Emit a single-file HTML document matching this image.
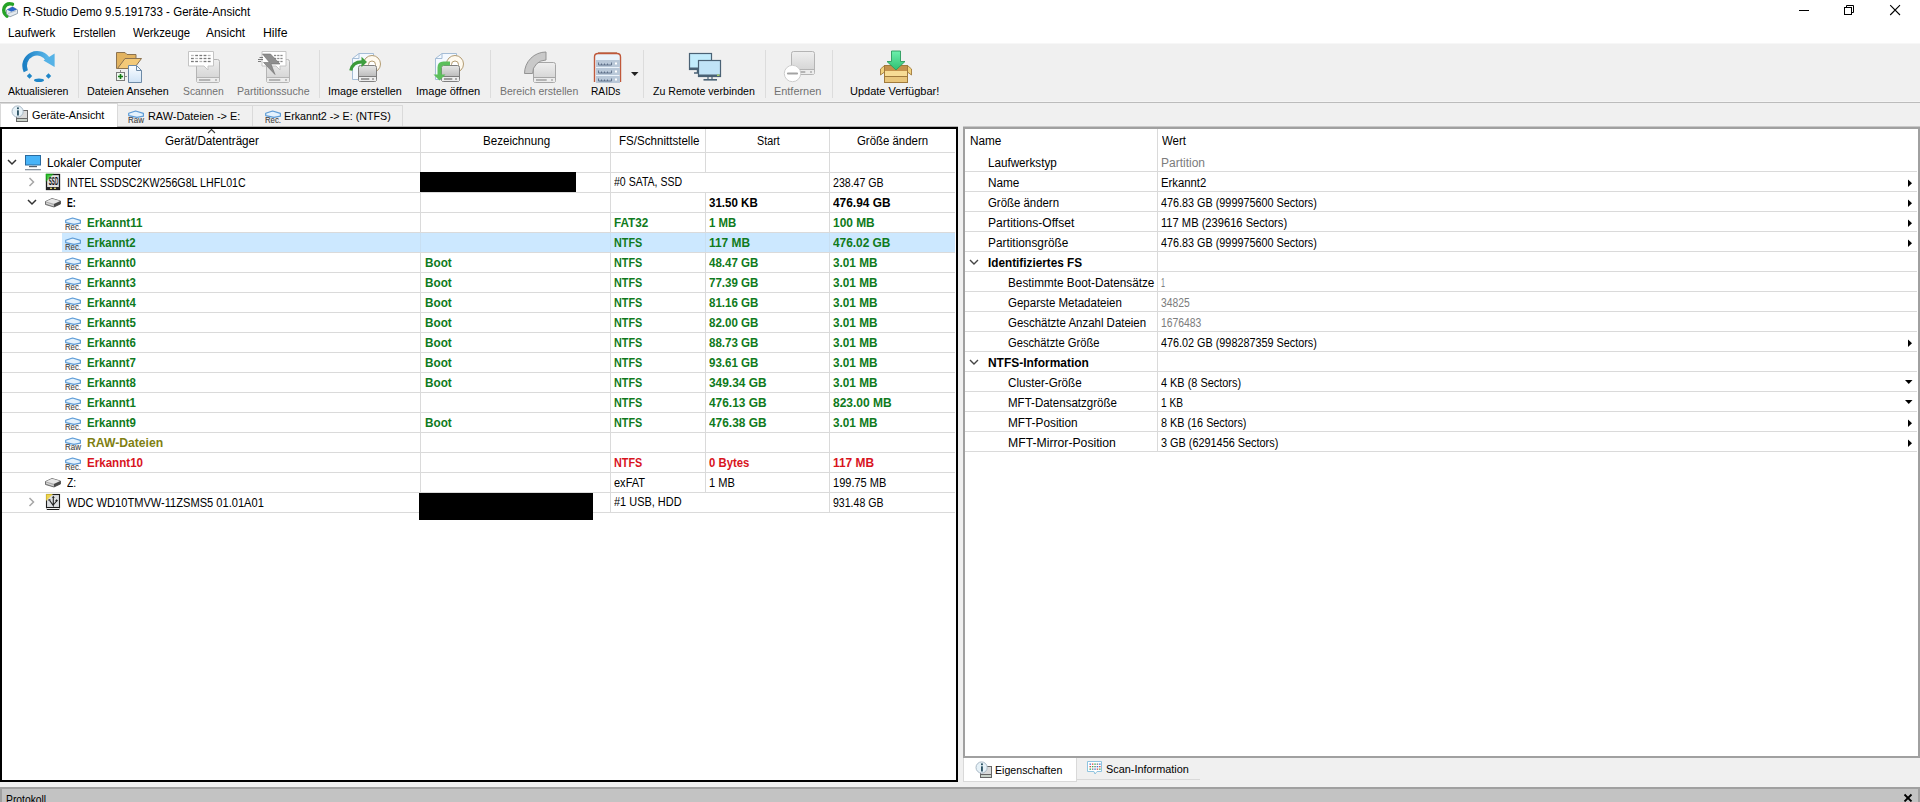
<!DOCTYPE html>
<html><head><meta charset="utf-8"><style>
html,body{margin:0;padding:0;width:1920px;height:802px;overflow:hidden;background:#f0f0f0}
.r{position:absolute}
.t{position:absolute;white-space:nowrap;font-family:"Liberation Sans",sans-serif;transform-origin:0 0;color:#000}
svg{position:absolute;left:0;top:0}
</style></head><body>
<div class="r" style="left:0px;top:0px;width:1920px;height:43px;background:#fff;"></div><div class="r" style="left:0px;top:43px;width:1920px;height:1px;background:#f7f7f7;"></div><div class="r" style="left:0px;top:101px;width:1920px;height:1px;background:#f4f4f4;"></div><div class="r" style="left:0px;top:102px;width:1920px;height:1px;background:#bcbcbc;"></div><div class="t" style="left:23.00px;top:6px;font-size:12px;line-height:12px;transform:scaleX(0.9620);">R-Studio Demo 9.5.191733 - Geräte-Ansicht</div><div class="r" style="left:1799px;top:10px;width:10px;height:1px;background:#000;"></div><div class="t" style="left:8.00px;top:27px;font-size:12px;line-height:12px;transform:scaleX(0.9700);">Laufwerk</div><div class="t" style="left:72.50px;top:27px;font-size:12px;line-height:12px;transform:scaleX(0.9149);">Erstellen</div><div class="t" style="left:132.50px;top:27px;font-size:12px;line-height:12px;transform:scaleX(0.9426);">Werkzeuge</div><div class="t" style="left:206.00px;top:27px;font-size:12px;line-height:12px;transform:scaleX(0.9938);">Ansicht</div><div class="t" style="left:262.50px;top:27px;font-size:12px;line-height:12px;transform:scaleX(1.0208);">Hilfe</div><div class="r" style="left:78px;top:50px;width:1px;height:48px;background:#dcdcdc;"></div><div class="r" style="left:319px;top:50px;width:1px;height:48px;background:#dcdcdc;"></div><div class="r" style="left:490px;top:50px;width:1px;height:48px;background:#dcdcdc;"></div><div class="r" style="left:643px;top:50px;width:1px;height:48px;background:#dcdcdc;"></div><div class="r" style="left:765px;top:50px;width:1px;height:48px;background:#dcdcdc;"></div><div class="r" style="left:832px;top:50px;width:1px;height:48px;background:#dcdcdc;"></div><div class="t" style="left:8.00px;top:86px;font-size:11px;line-height:11px;transform:scaleX(0.9587);">Aktualisieren</div><div class="t" style="left:87.00px;top:86px;font-size:11px;line-height:11px;transform:scaleX(0.9762);">Dateien Ansehen</div><div class="t" style="left:183.00px;top:86px;font-size:11px;line-height:11px;color:#727272;transform:scaleX(0.9395);">Scannen</div><div class="t" style="left:237.00px;top:86px;font-size:11px;line-height:11px;color:#727272;transform:scaleX(0.9653);">Partitionssuche</div><div class="t" style="left:328.00px;top:86px;font-size:11px;line-height:11px;transform:scaleX(0.9813);">Image erstellen</div><div class="t" style="left:416.00px;top:86px;font-size:11px;line-height:11px;transform:scaleX(1.0031);">Image öffnen</div><div class="t" style="left:500.00px;top:86px;font-size:11px;line-height:11px;color:#727272;transform:scaleX(0.9549);">Bereich erstellen</div><div class="t" style="left:591.00px;top:86px;font-size:11px;line-height:11px;transform:scaleX(0.9250);">RAIDs</div><div class="t" style="left:653.00px;top:86px;font-size:11px;line-height:11px;transform:scaleX(0.9623);">Zu Remote verbinden</div><div class="t" style="left:774.00px;top:86px;font-size:11px;line-height:11px;color:#727272;transform:scaleX(0.9917);">Entfernen</div><div class="t" style="left:850.00px;top:86px;font-size:11px;line-height:11px;">Update Verfügbar!</div><div class="r" style="left:0px;top:103px;width:118px;height:24px;background:#d9d9d9;"></div><div class="r" style="left:1px;top:104px;width:116px;height:23px;background:#fff;"></div><div class="r" style="left:117px;top:105px;width:136px;height:22px;background:#dadada;"></div><div class="r" style="left:118px;top:106px;width:134px;height:21px;background:#f0f0f0;"></div><div class="r" style="left:252px;top:105px;width:151px;height:22px;background:#dadada;"></div><div class="r" style="left:253px;top:106px;width:149px;height:21px;background:#f0f0f0;"></div><div class="r" style="left:117px;top:126px;width:841px;height:1px;background:#b4b4b4;"></div><div class="t" style="left:32.00px;top:110px;font-size:11px;line-height:11px;transform:scaleX(0.9863);">Geräte-Ansicht</div><div class="t" style="left:148.00px;top:111px;font-size:11px;line-height:11px;transform:scaleX(0.9892);">RAW-Dateien -&gt; E:</div><div class="t" style="left:284.00px;top:111px;font-size:11px;line-height:11px;transform:scaleX(0.9727);">Erkannt2 -&gt; E: (NTFS)</div><div class="r" style="left:0px;top:127px;width:958px;height:655px;background:#000;"></div><div class="r" style="left:2px;top:129px;width:954px;height:651px;background:#fff;"></div><div class="r" style="left:62px;top:233px;width:893px;height:19px;background:#cce8ff;"></div><div class="r" style="left:2px;top:152px;width:953px;height:1px;background:#dadada;"></div><div class="r" style="left:2px;top:172px;width:953px;height:1px;background:#dadada;"></div><div class="r" style="left:2px;top:192px;width:953px;height:1px;background:#dadada;"></div><div class="r" style="left:2px;top:212px;width:953px;height:1px;background:#dadada;"></div><div class="r" style="left:2px;top:232px;width:953px;height:1px;background:#dadada;"></div><div class="r" style="left:2px;top:252px;width:953px;height:1px;background:#dadada;"></div><div class="r" style="left:2px;top:272px;width:953px;height:1px;background:#dadada;"></div><div class="r" style="left:2px;top:292px;width:953px;height:1px;background:#dadada;"></div><div class="r" style="left:2px;top:312px;width:953px;height:1px;background:#dadada;"></div><div class="r" style="left:2px;top:332px;width:953px;height:1px;background:#dadada;"></div><div class="r" style="left:2px;top:352px;width:953px;height:1px;background:#dadada;"></div><div class="r" style="left:2px;top:372px;width:953px;height:1px;background:#dadada;"></div><div class="r" style="left:2px;top:392px;width:953px;height:1px;background:#dadada;"></div><div class="r" style="left:2px;top:412px;width:953px;height:1px;background:#dadada;"></div><div class="r" style="left:2px;top:432px;width:953px;height:1px;background:#dadada;"></div><div class="r" style="left:2px;top:452px;width:953px;height:1px;background:#dadada;"></div><div class="r" style="left:2px;top:472px;width:953px;height:1px;background:#dadada;"></div><div class="r" style="left:2px;top:492px;width:953px;height:1px;background:#dadada;"></div><div class="r" style="left:2px;top:512px;width:953px;height:1px;background:#dadada;"></div><div class="r" style="left:420px;top:129px;width:1px;height:23px;background:#dadada;"></div><div class="r" style="left:610px;top:129px;width:1px;height:23px;background:#dadada;"></div><div class="r" style="left:705px;top:129px;width:1px;height:23px;background:#dadada;"></div><div class="r" style="left:829px;top:129px;width:1px;height:23px;background:#dadada;"></div><div class="r" style="left:420px;top:153px;width:1px;height:19px;background:#dadada;"></div><div class="r" style="left:610px;top:153px;width:1px;height:19px;background:#dadada;"></div><div class="r" style="left:705px;top:153px;width:1px;height:19px;background:#dadada;"></div><div class="r" style="left:829px;top:153px;width:1px;height:19px;background:#dadada;"></div><div class="r" style="left:420px;top:173px;width:1px;height:19px;background:#dadada;"></div><div class="r" style="left:610px;top:173px;width:1px;height:19px;background:#dadada;"></div><div class="r" style="left:829px;top:173px;width:1px;height:19px;background:#dadada;"></div><div class="r" style="left:420px;top:193px;width:1px;height:19px;background:#dadada;"></div><div class="r" style="left:610px;top:193px;width:1px;height:19px;background:#dadada;"></div><div class="r" style="left:705px;top:193px;width:1px;height:19px;background:#dadada;"></div><div class="r" style="left:829px;top:193px;width:1px;height:19px;background:#dadada;"></div><div class="r" style="left:420px;top:213px;width:1px;height:19px;background:#dadada;"></div><div class="r" style="left:610px;top:213px;width:1px;height:19px;background:#dadada;"></div><div class="r" style="left:705px;top:213px;width:1px;height:19px;background:#dadada;"></div><div class="r" style="left:829px;top:213px;width:1px;height:19px;background:#dadada;"></div><div class="r" style="left:420px;top:233px;width:1px;height:19px;background:#c8dff2;"></div><div class="r" style="left:610px;top:233px;width:1px;height:19px;background:#c8dff2;"></div><div class="r" style="left:705px;top:233px;width:1px;height:19px;background:#c8dff2;"></div><div class="r" style="left:829px;top:233px;width:1px;height:19px;background:#c8dff2;"></div><div class="r" style="left:420px;top:253px;width:1px;height:19px;background:#dadada;"></div><div class="r" style="left:610px;top:253px;width:1px;height:19px;background:#dadada;"></div><div class="r" style="left:705px;top:253px;width:1px;height:19px;background:#dadada;"></div><div class="r" style="left:829px;top:253px;width:1px;height:19px;background:#dadada;"></div><div class="r" style="left:420px;top:273px;width:1px;height:19px;background:#dadada;"></div><div class="r" style="left:610px;top:273px;width:1px;height:19px;background:#dadada;"></div><div class="r" style="left:705px;top:273px;width:1px;height:19px;background:#dadada;"></div><div class="r" style="left:829px;top:273px;width:1px;height:19px;background:#dadada;"></div><div class="r" style="left:420px;top:293px;width:1px;height:19px;background:#dadada;"></div><div class="r" style="left:610px;top:293px;width:1px;height:19px;background:#dadada;"></div><div class="r" style="left:705px;top:293px;width:1px;height:19px;background:#dadada;"></div><div class="r" style="left:829px;top:293px;width:1px;height:19px;background:#dadada;"></div><div class="r" style="left:420px;top:313px;width:1px;height:19px;background:#dadada;"></div><div class="r" style="left:610px;top:313px;width:1px;height:19px;background:#dadada;"></div><div class="r" style="left:705px;top:313px;width:1px;height:19px;background:#dadada;"></div><div class="r" style="left:829px;top:313px;width:1px;height:19px;background:#dadada;"></div><div class="r" style="left:420px;top:333px;width:1px;height:19px;background:#dadada;"></div><div class="r" style="left:610px;top:333px;width:1px;height:19px;background:#dadada;"></div><div class="r" style="left:705px;top:333px;width:1px;height:19px;background:#dadada;"></div><div class="r" style="left:829px;top:333px;width:1px;height:19px;background:#dadada;"></div><div class="r" style="left:420px;top:353px;width:1px;height:19px;background:#dadada;"></div><div class="r" style="left:610px;top:353px;width:1px;height:19px;background:#dadada;"></div><div class="r" style="left:705px;top:353px;width:1px;height:19px;background:#dadada;"></div><div class="r" style="left:829px;top:353px;width:1px;height:19px;background:#dadada;"></div><div class="r" style="left:420px;top:373px;width:1px;height:19px;background:#dadada;"></div><div class="r" style="left:610px;top:373px;width:1px;height:19px;background:#dadada;"></div><div class="r" style="left:705px;top:373px;width:1px;height:19px;background:#dadada;"></div><div class="r" style="left:829px;top:373px;width:1px;height:19px;background:#dadada;"></div><div class="r" style="left:420px;top:393px;width:1px;height:19px;background:#dadada;"></div><div class="r" style="left:610px;top:393px;width:1px;height:19px;background:#dadada;"></div><div class="r" style="left:705px;top:393px;width:1px;height:19px;background:#dadada;"></div><div class="r" style="left:829px;top:393px;width:1px;height:19px;background:#dadada;"></div><div class="r" style="left:420px;top:413px;width:1px;height:19px;background:#dadada;"></div><div class="r" style="left:610px;top:413px;width:1px;height:19px;background:#dadada;"></div><div class="r" style="left:705px;top:413px;width:1px;height:19px;background:#dadada;"></div><div class="r" style="left:829px;top:413px;width:1px;height:19px;background:#dadada;"></div><div class="r" style="left:420px;top:433px;width:1px;height:19px;background:#dadada;"></div><div class="r" style="left:610px;top:433px;width:1px;height:19px;background:#dadada;"></div><div class="r" style="left:705px;top:433px;width:1px;height:19px;background:#dadada;"></div><div class="r" style="left:829px;top:433px;width:1px;height:19px;background:#dadada;"></div><div class="r" style="left:420px;top:453px;width:1px;height:19px;background:#dadada;"></div><div class="r" style="left:610px;top:453px;width:1px;height:19px;background:#dadada;"></div><div class="r" style="left:705px;top:453px;width:1px;height:19px;background:#dadada;"></div><div class="r" style="left:829px;top:453px;width:1px;height:19px;background:#dadada;"></div><div class="r" style="left:420px;top:473px;width:1px;height:19px;background:#dadada;"></div><div class="r" style="left:610px;top:473px;width:1px;height:19px;background:#dadada;"></div><div class="r" style="left:705px;top:473px;width:1px;height:19px;background:#dadada;"></div><div class="r" style="left:829px;top:473px;width:1px;height:19px;background:#dadada;"></div><div class="r" style="left:420px;top:493px;width:1px;height:19px;background:#dadada;"></div><div class="r" style="left:610px;top:493px;width:1px;height:19px;background:#dadada;"></div><div class="r" style="left:829px;top:493px;width:1px;height:19px;background:#dadada;"></div><div class="t" style="left:165.00px;top:135px;font-size:12px;line-height:12px;transform:scaleX(0.9716);">Gerät/Datenträger</div><div class="t" style="left:483.00px;top:135px;font-size:12px;line-height:12px;transform:scaleX(0.9681);">Bezeichnung</div><div class="t" style="left:618.50px;top:135px;font-size:12px;line-height:12px;transform:scaleX(0.9643);">FS/Schnittstelle</div><div class="t" style="left:756.50px;top:135px;font-size:12px;line-height:12px;transform:scaleX(0.8962);">Start</div><div class="t" style="left:857.00px;top:135px;font-size:12px;line-height:12px;transform:scaleX(0.9507);">Größe ändern</div><div class="t" style="left:47.00px;top:157px;font-size:12px;line-height:12px;transform:scaleX(0.9905);">Lokaler Computer</div><div class="t" style="left:67.00px;top:177px;font-size:12px;line-height:12px;transform:scaleX(0.8881);">INTEL SSDSC2KW256G8L LHFL01C</div><div class="t" style="left:614.00px;top:176px;font-size:12px;line-height:12px;transform:scaleX(0.8782);">#0 SATA, SSD</div><div class="t" style="left:833.00px;top:177px;font-size:12px;line-height:12px;transform:scaleX(0.8825);">238.47 GB</div><div class="t" style="left:67.00px;top:197px;font-size:12px;line-height:12px;font-weight:bold;transform:scaleX(0.7292);">E:</div><div class="t" style="left:709.00px;top:197px;font-size:12px;line-height:12px;font-weight:bold;transform:scaleX(0.9608);">31.50 KB</div><div class="t" style="left:833.00px;top:197px;font-size:12px;line-height:12px;font-weight:bold;transform:scaleX(0.9914);">476.94 GB</div><div class="t" style="left:87.00px;top:217px;font-size:12px;line-height:12px;font-weight:bold;color:#0f7a20;transform:scaleX(0.9655);">Erkannt11</div><div class="t" style="left:614.00px;top:217px;font-size:12px;line-height:12px;font-weight:bold;color:#0f7a20;transform:scaleX(0.9743);">FAT32</div><div class="t" style="left:709.00px;top:217px;font-size:12px;line-height:12px;font-weight:bold;color:#0f7a20;transform:scaleX(0.9517);">1 MB</div><div class="t" style="left:833.00px;top:217px;font-size:12px;line-height:12px;font-weight:bold;color:#0f7a20;transform:scaleX(0.9929);">100 MB</div><div class="t" style="left:87.00px;top:237px;font-size:12px;line-height:12px;font-weight:bold;color:#0f7a20;transform:scaleX(0.9471);">Erkannt2</div><div class="t" style="left:614.00px;top:237px;font-size:12px;line-height:12px;font-weight:bold;color:#0f7a20;transform:scaleX(0.9000);">NTFS</div><div class="t" style="left:709.00px;top:237px;font-size:12px;line-height:12px;font-weight:bold;color:#0f7a20;transform:scaleX(0.9929);">117 MB</div><div class="t" style="left:833.00px;top:237px;font-size:12px;line-height:12px;font-weight:bold;color:#0f7a20;transform:scaleX(0.9897);">476.02 GB</div><div class="t" style="left:87.00px;top:257px;font-size:12px;line-height:12px;font-weight:bold;color:#0f7a20;transform:scaleX(0.9519);">Erkannt0</div><div class="t" style="left:425.00px;top:257px;font-size:12px;line-height:12px;font-weight:bold;color:#0f7a20;transform:scaleX(0.9778);">Boot</div><div class="t" style="left:614.00px;top:257px;font-size:12px;line-height:12px;font-weight:bold;color:#0f7a20;transform:scaleX(0.9000);">NTFS</div><div class="t" style="left:709.00px;top:257px;font-size:12px;line-height:12px;font-weight:bold;color:#0f7a20;transform:scaleX(0.9615);">48.47 GB</div><div class="t" style="left:833.00px;top:257px;font-size:12px;line-height:12px;font-weight:bold;color:#0f7a20;transform:scaleX(0.9804);">3.01 MB</div><div class="t" style="left:87.00px;top:277px;font-size:12px;line-height:12px;font-weight:bold;color:#0f7a20;transform:scaleX(0.9519);">Erkannt3</div><div class="t" style="left:425.00px;top:277px;font-size:12px;line-height:12px;font-weight:bold;color:#0f7a20;transform:scaleX(0.9778);">Boot</div><div class="t" style="left:614.00px;top:277px;font-size:12px;line-height:12px;font-weight:bold;color:#0f7a20;transform:scaleX(0.9000);">NTFS</div><div class="t" style="left:709.00px;top:277px;font-size:12px;line-height:12px;font-weight:bold;color:#0f7a20;transform:scaleX(0.9615);">77.39 GB</div><div class="t" style="left:833.00px;top:277px;font-size:12px;line-height:12px;font-weight:bold;color:#0f7a20;transform:scaleX(0.9804);">3.01 MB</div><div class="t" style="left:87.00px;top:297px;font-size:12px;line-height:12px;font-weight:bold;color:#0f7a20;transform:scaleX(0.9519);">Erkannt4</div><div class="t" style="left:425.00px;top:297px;font-size:12px;line-height:12px;font-weight:bold;color:#0f7a20;transform:scaleX(0.9778);">Boot</div><div class="t" style="left:614.00px;top:297px;font-size:12px;line-height:12px;font-weight:bold;color:#0f7a20;transform:scaleX(0.9000);">NTFS</div><div class="t" style="left:709.00px;top:297px;font-size:12px;line-height:12px;font-weight:bold;color:#0f7a20;transform:scaleX(0.9615);">81.16 GB</div><div class="t" style="left:833.00px;top:297px;font-size:12px;line-height:12px;font-weight:bold;color:#0f7a20;transform:scaleX(0.9804);">3.01 MB</div><div class="t" style="left:87.00px;top:317px;font-size:12px;line-height:12px;font-weight:bold;color:#0f7a20;transform:scaleX(0.9519);">Erkannt5</div><div class="t" style="left:425.00px;top:317px;font-size:12px;line-height:12px;font-weight:bold;color:#0f7a20;transform:scaleX(0.9778);">Boot</div><div class="t" style="left:614.00px;top:317px;font-size:12px;line-height:12px;font-weight:bold;color:#0f7a20;transform:scaleX(0.9000);">NTFS</div><div class="t" style="left:709.00px;top:317px;font-size:12px;line-height:12px;font-weight:bold;color:#0f7a20;transform:scaleX(0.9615);">82.00 GB</div><div class="t" style="left:833.00px;top:317px;font-size:12px;line-height:12px;font-weight:bold;color:#0f7a20;transform:scaleX(0.9804);">3.01 MB</div><div class="t" style="left:87.00px;top:337px;font-size:12px;line-height:12px;font-weight:bold;color:#0f7a20;transform:scaleX(0.9519);">Erkannt6</div><div class="t" style="left:425.00px;top:337px;font-size:12px;line-height:12px;font-weight:bold;color:#0f7a20;transform:scaleX(0.9778);">Boot</div><div class="t" style="left:614.00px;top:337px;font-size:12px;line-height:12px;font-weight:bold;color:#0f7a20;transform:scaleX(0.9000);">NTFS</div><div class="t" style="left:709.00px;top:337px;font-size:12px;line-height:12px;font-weight:bold;color:#0f7a20;transform:scaleX(0.9615);">88.73 GB</div><div class="t" style="left:833.00px;top:337px;font-size:12px;line-height:12px;font-weight:bold;color:#0f7a20;transform:scaleX(0.9804);">3.01 MB</div><div class="t" style="left:87.00px;top:357px;font-size:12px;line-height:12px;font-weight:bold;color:#0f7a20;transform:scaleX(0.9519);">Erkannt7</div><div class="t" style="left:425.00px;top:357px;font-size:12px;line-height:12px;font-weight:bold;color:#0f7a20;transform:scaleX(0.9778);">Boot</div><div class="t" style="left:614.00px;top:357px;font-size:12px;line-height:12px;font-weight:bold;color:#0f7a20;transform:scaleX(0.9000);">NTFS</div><div class="t" style="left:709.00px;top:357px;font-size:12px;line-height:12px;font-weight:bold;color:#0f7a20;transform:scaleX(0.9615);">93.61 GB</div><div class="t" style="left:833.00px;top:357px;font-size:12px;line-height:12px;font-weight:bold;color:#0f7a20;transform:scaleX(0.9804);">3.01 MB</div><div class="t" style="left:87.00px;top:377px;font-size:12px;line-height:12px;font-weight:bold;color:#0f7a20;transform:scaleX(0.9519);">Erkannt8</div><div class="t" style="left:425.00px;top:377px;font-size:12px;line-height:12px;font-weight:bold;color:#0f7a20;transform:scaleX(0.9778);">Boot</div><div class="t" style="left:614.00px;top:377px;font-size:12px;line-height:12px;font-weight:bold;color:#0f7a20;transform:scaleX(0.9000);">NTFS</div><div class="t" style="left:709.00px;top:377px;font-size:12px;line-height:12px;font-weight:bold;color:#0f7a20;transform:scaleX(0.9914);">349.34 GB</div><div class="t" style="left:833.00px;top:377px;font-size:12px;line-height:12px;font-weight:bold;color:#0f7a20;transform:scaleX(0.9804);">3.01 MB</div><div class="t" style="left:87.00px;top:397px;font-size:12px;line-height:12px;font-weight:bold;color:#0f7a20;transform:scaleX(0.9519);">Erkannt1</div><div class="t" style="left:614.00px;top:397px;font-size:12px;line-height:12px;font-weight:bold;color:#0f7a20;transform:scaleX(0.9000);">NTFS</div><div class="t" style="left:709.00px;top:397px;font-size:12px;line-height:12px;font-weight:bold;color:#0f7a20;transform:scaleX(0.9914);">476.13 GB</div><div class="t" style="left:833.00px;top:397px;font-size:12px;line-height:12px;font-weight:bold;color:#0f7a20;">823.00 MB</div><div class="t" style="left:87.00px;top:417px;font-size:12px;line-height:12px;font-weight:bold;color:#0f7a20;transform:scaleX(0.9519);">Erkannt9</div><div class="t" style="left:425.00px;top:417px;font-size:12px;line-height:12px;font-weight:bold;color:#0f7a20;transform:scaleX(0.9778);">Boot</div><div class="t" style="left:614.00px;top:417px;font-size:12px;line-height:12px;font-weight:bold;color:#0f7a20;transform:scaleX(0.9000);">NTFS</div><div class="t" style="left:709.00px;top:417px;font-size:12px;line-height:12px;font-weight:bold;color:#0f7a20;transform:scaleX(0.9914);">476.38 GB</div><div class="t" style="left:833.00px;top:417px;font-size:12px;line-height:12px;font-weight:bold;color:#0f7a20;transform:scaleX(0.9804);">3.01 MB</div><div class="t" style="left:87.00px;top:437px;font-size:12px;line-height:12px;font-weight:bold;color:#7f7f12;transform:scaleX(1.0133);">RAW-Dateien</div><div class="t" style="left:87.00px;top:457px;font-size:12px;line-height:12px;font-weight:bold;color:#d8141e;transform:scaleX(0.9655);">Erkannt10</div><div class="t" style="left:614.00px;top:457px;font-size:12px;line-height:12px;font-weight:bold;color:#d8141e;transform:scaleX(0.9000);">NTFS</div><div class="t" style="left:709.00px;top:457px;font-size:12px;line-height:12px;font-weight:bold;color:#d8141e;transform:scaleX(0.9442);">0 Bytes</div><div class="t" style="left:833.00px;top:457px;font-size:12px;line-height:12px;font-weight:bold;color:#d8141e;transform:scaleX(0.9929);">117 MB</div><div class="t" style="left:67.00px;top:477px;font-size:12px;line-height:12px;transform:scaleX(0.8545);">Z:</div><div class="t" style="left:614.00px;top:477px;font-size:12px;line-height:12px;transform:scaleX(0.9176);">exFAT</div><div class="t" style="left:709.00px;top:477px;font-size:12px;line-height:12px;transform:scaleX(0.9214);">1 MB</div><div class="t" style="left:833.00px;top:477px;font-size:12px;line-height:12px;transform:scaleX(0.9181);">199.75 MB</div><div class="t" style="left:67.00px;top:497px;font-size:12px;line-height:12px;transform:scaleX(0.9244);">WDC WD10TMVW-11ZSMS5 01.01A01</div><div class="t" style="left:614.00px;top:496px;font-size:12px;line-height:12px;transform:scaleX(0.9135);">#1 USB, HDD</div><div class="t" style="left:833.00px;top:497px;font-size:12px;line-height:12px;transform:scaleX(0.8789);">931.48 GB</div><div class="r" style="left:420px;top:172px;width:156px;height:20px;background:#000;"></div><div class="r" style="left:419px;top:493px;width:174px;height:27px;background:#000;"></div><div class="r" style="left:963px;top:126px;width:957px;height:1px;background:#c8c8c8;"></div><div class="r" style="left:963px;top:127px;width:957px;height:631px;background:#a0a0a0;"></div><div class="r" style="left:965px;top:129px;width:953px;height:627px;background:#fff;"></div><div class="r" style="left:1157px;top:129px;width:1px;height:322px;background:#dadada;"></div><div class="r" style="left:965px;top:171px;width:952px;height:1px;background:#dadada;"></div><div class="r" style="left:965px;top:191px;width:952px;height:1px;background:#dadada;"></div><div class="r" style="left:965px;top:211px;width:952px;height:1px;background:#dadada;"></div><div class="r" style="left:965px;top:231px;width:952px;height:1px;background:#dadada;"></div><div class="r" style="left:965px;top:251px;width:952px;height:1px;background:#dadada;"></div><div class="r" style="left:965px;top:271px;width:952px;height:1px;background:#dadada;"></div><div class="r" style="left:965px;top:291px;width:952px;height:1px;background:#dadada;"></div><div class="r" style="left:965px;top:311px;width:952px;height:1px;background:#dadada;"></div><div class="r" style="left:965px;top:331px;width:952px;height:1px;background:#dadada;"></div><div class="r" style="left:965px;top:351px;width:952px;height:1px;background:#dadada;"></div><div class="r" style="left:965px;top:371px;width:952px;height:1px;background:#dadada;"></div><div class="r" style="left:965px;top:391px;width:952px;height:1px;background:#dadada;"></div><div class="r" style="left:965px;top:411px;width:952px;height:1px;background:#dadada;"></div><div class="r" style="left:965px;top:431px;width:952px;height:1px;background:#dadada;"></div><div class="r" style="left:965px;top:451px;width:952px;height:1px;background:#dadada;"></div><div class="t" style="left:970.00px;top:135px;font-size:12px;line-height:12px;transform:scaleX(0.9812);">Name</div><div class="t" style="left:1162.00px;top:135px;font-size:12px;line-height:12px;transform:scaleX(0.9519);">Wert</div><div class="t" style="left:988.00px;top:157px;font-size:12px;line-height:12px;transform:scaleX(0.9718);">Laufwerkstyp</div><div class="t" style="left:1161.00px;top:157px;font-size:12px;line-height:12px;color:#7c7c7c;">Partition</div><div class="t" style="left:988.00px;top:177px;font-size:12px;line-height:12px;transform:scaleX(0.9812);">Name</div><div class="t" style="left:1161.00px;top:177px;font-size:12px;line-height:12px;transform:scaleX(0.9427);">Erkannt2</div><div class="t" style="left:988.00px;top:197px;font-size:12px;line-height:12px;transform:scaleX(0.9500);">Größe ändern</div><div class="t" style="left:1161.00px;top:197px;font-size:12px;line-height:12px;transform:scaleX(0.9017);">476.83 GB (999975600 Sectors)</div><div class="t" style="left:988.00px;top:217px;font-size:12px;line-height:12px;transform:scaleX(1.0058);">Partitions-Offset</div><div class="t" style="left:1161.00px;top:217px;font-size:12px;line-height:12px;transform:scaleX(0.9283);">117 MB (239616 Sectors)</div><div class="t" style="left:988.00px;top:237px;font-size:12px;line-height:12px;transform:scaleX(0.9866);">Partitionsgröße</div><div class="t" style="left:1161.00px;top:237px;font-size:12px;line-height:12px;transform:scaleX(0.9017);">476.83 GB (999975600 Sectors)</div><div class="t" style="left:988.00px;top:257px;font-size:12px;line-height:12px;font-weight:bold;transform:scaleX(0.9792);">Identifiziertes FS</div><div class="t" style="left:1008.00px;top:277px;font-size:12px;line-height:12px;transform:scaleX(0.9800);">Bestimmte Boot-Datensätze</div><div class="t" style="left:1161.00px;top:277px;font-size:12px;line-height:12px;color:#7c7c7c;transform:scaleX(0.6000);">1</div><div class="t" style="left:1008.00px;top:297px;font-size:12px;line-height:12px;transform:scaleX(0.9588);">Geparste Metadateien</div><div class="t" style="left:1161.00px;top:297px;font-size:12px;line-height:12px;color:#7c7c7c;transform:scaleX(0.8618);">34825</div><div class="t" style="left:1008.00px;top:317px;font-size:12px;line-height:12px;transform:scaleX(0.9538);">Geschätzte Anzahl Dateien</div><div class="t" style="left:1161.00px;top:317px;font-size:12px;line-height:12px;color:#7c7c7c;transform:scaleX(0.8638);">1676483</div><div class="t" style="left:1008.00px;top:337px;font-size:12px;line-height:12px;transform:scaleX(0.9327);">Geschätzte Größe</div><div class="t" style="left:1161.00px;top:337px;font-size:12px;line-height:12px;transform:scaleX(0.9017);">476.02 GB (998287359 Sectors)</div><div class="t" style="left:988.00px;top:357px;font-size:12px;line-height:12px;font-weight:bold;transform:scaleX(0.9950);">NTFS-Information</div><div class="t" style="left:1008.00px;top:377px;font-size:12px;line-height:12px;transform:scaleX(0.9684);">Cluster-Größe</div><div class="t" style="left:1161.00px;top:377px;font-size:12px;line-height:12px;transform:scaleX(0.9091);">4 KB (8 Sectors)</div><div class="t" style="left:1008.00px;top:397px;font-size:12px;line-height:12px;transform:scaleX(0.9605);">MFT-Datensatzgröße</div><div class="t" style="left:1161.00px;top:397px;font-size:12px;line-height:12px;transform:scaleX(0.8462);">1 KB</div><div class="t" style="left:1008.00px;top:417px;font-size:12px;line-height:12px;transform:scaleX(0.9845);">MFT-Position</div><div class="t" style="left:1161.00px;top:417px;font-size:12px;line-height:12px;transform:scaleX(0.9021);">8 KB (16 Sectors)</div><div class="t" style="left:1008.00px;top:437px;font-size:12px;line-height:12px;transform:scaleX(1.0179);">MFT-Mirror-Position</div><div class="t" style="left:1161.00px;top:437px;font-size:12px;line-height:12px;transform:scaleX(0.9062);">3 GB (6291456 Sectors)</div><div class="r" style="left:963px;top:758px;width:114px;height:24px;background:#d9d9d9;"></div><div class="r" style="left:964px;top:758px;width:112px;height:23px;background:#fff;"></div><div class="r" style="left:1077px;top:779px;width:123px;height:1px;background:#d9d9d9;"></div><div class="t" style="left:995.00px;top:765px;font-size:11px;line-height:11px;transform:scaleX(0.9657);">Eigenschaften</div><div class="t" style="left:1106.00px;top:764px;font-size:11px;line-height:11px;transform:scaleX(0.9881);">Scan-Information</div><div class="r" style="left:0px;top:787px;width:1920px;height:2px;background:#a0a0a0;"></div><div class="r" style="left:0px;top:789px;width:1920px;height:13px;background:#c3c3c3;"></div><div class="r" style="left:0px;top:789px;width:2px;height:13px;background:#a0a0a0;"></div><div class="r" style="left:1918px;top:789px;width:2px;height:13px;background:#a0a0a0;"></div><div class="t" style="left:6.00px;top:794px;font-size:12px;line-height:12px;transform:scaleX(0.8596);">Protokoll</div>
<svg width="1920" height="802" viewBox="0 0 1920 802"><rect x="1844.5" y="7.5" width="7" height="7" fill="none" stroke="#000"/><path d="M1846.5 7.5V5.5H1853.5V12.5H1851.5" fill="none" stroke="#000"/><path d="M1890.2 5.2L1900 15M1900 5.2L1890.2 15" stroke="#000" stroke-width="1.1"/><path d="M631 72H638.5L634.75 76Z" fill="#222"/><path d="M208 133L211.5 129.5L215 133" fill="none" stroke="#3a3a3a" stroke-width="1.1"/><path d="M1908 179.5V187L1912 183.25Z" fill="#000"/><path d="M1908 199.5V207L1912 203.25Z" fill="#000"/><path d="M1908 219.5V227L1912 223.25Z" fill="#000"/><path d="M1908 239.5V247L1912 243.25Z" fill="#000"/><path d="M970 260L974 264L978 260" fill="none" stroke="#444" stroke-width="1.4"/><path d="M1908 339.5V347L1912 343.25Z" fill="#000"/><path d="M970 360L974 364L978 360" fill="none" stroke="#444" stroke-width="1.4"/><path d="M1905 380H1912.5L1908.75 384Z" fill="#000"/><path d="M1905 400H1912.5L1908.75 404Z" fill="#000"/><path d="M1908 419.5V427L1912 423.25Z" fill="#000"/><path d="M1908 439.5V447L1912 443.25Z" fill="#000"/><path d="M1904.5 794.5L1911.5 801.5M1911.5 794.5L1904.5 801.5" stroke="#000" stroke-width="1.8"/><defs>
<linearGradient id="gBlue" x1="0" y1="0" x2="1" y2="0"><stop offset="0" stop-color="#1b7fc4"/><stop offset="1" stop-color="#5cb8ea"/></linearGradient>
<linearGradient id="gDrive" x1="0" y1="0" x2="0" y2="1"><stop offset="0" stop-color="#e6e6e6"/><stop offset="1" stop-color="#a9a9a9"/></linearGradient>
<linearGradient id="gDriveL" x1="0" y1="0" x2="0" y2="1"><stop offset="0" stop-color="#efefef"/><stop offset="1" stop-color="#cfcfcf"/></linearGradient>
<linearGradient id="gDoc" x1="0" y1="0" x2="0" y2="1"><stop offset="0" stop-color="#fbfdff"/><stop offset="1" stop-color="#cfe3f6"/></linearGradient>
<linearGradient id="gArrowG" x1="0" y1="0" x2="0" y2="1"><stop offset="0" stop-color="#6cf0ac"/><stop offset="1" stop-color="#2fbf72"/></linearGradient>
<linearGradient id="gSSD" x1="0" y1="0" x2="1" y2="1"><stop offset="0" stop-color="#18c018"/><stop offset="0.5" stop-color="#18c018" stop-opacity="0.6"/><stop offset="1" stop-color="#18c018" stop-opacity="0"/></linearGradient>
</defs><g transform="translate(0,0)"><path d="M12.5 4.2Q6.5 2.5 4.2 7.5Q2.5 12.5 7 16.2" fill="none" stroke="#27a327" stroke-width="3.4" stroke-linecap="round"/><path d="M6.5 10L12.5 6.8L17.5 9.8V13.5L10 16.8L6.5 14Z" fill="#e4eaf0" stroke="#8190a0" stroke-width="0.8"/><path d="M7 9.8L12.5 6.8L17 9.5L11.5 11.8Z" fill="#2a64c8"/><path d="M8 13.5L16 10.8" stroke="#a8b4c0" stroke-width="0.8"/></g><g transform="translate(20,46)"><path d="M5.8 25.2A12 12 0 1 1 28.5 14.5" fill="none" stroke="url(#gBlue)" stroke-width="4.6"/><path d="M34.6 7.5L34.6 21L23.5 14.5Z" fill="#55b2e6"/><path d="M9.5 27.3L12.2 30L9.5 32.7L6.8 30Z" fill="#1f86c8"/><path d="M28.5 27.3L31.2 30L28.5 32.7L25.8 30Z" fill="#1f86c8"/><ellipse cx="19" cy="34.2" rx="5" ry="1.8" fill="#1f86c8"/></g><g transform="translate(110,46)"><path d="M6.5 6.5H15L17 8.5H26V22.5H6.5Z" fill="#e2b360" stroke="#8c7350"/><path d="M7.5 22.5L15 12.5H31.5L24 22.5Z" fill="#f3c978" stroke="#8c7350"/><path d="M18.5 19.5H26.5L31.5 24.5V36.5H18.5Z" fill="url(#gDoc)" stroke="#6d8aa6"/><path d="M26.5 19.5V24.5H31.5" fill="none" stroke="#6d8aa6"/><rect x="6.5" y="26.5" width="8" height="8" fill="#eef8ee" stroke="#7a7a7a"/><path d="M10.5 28V33M8 30.5H13" stroke="#127a12" stroke-width="1.6"/><path d="M10.5 24V26.5M14.5 30.5H17" stroke="#8a8a8a"/></g><g transform="translate(184,48)"><rect x="12.5" y="11.5" width="23.0" height="23.0" rx="2" fill="url(#gDriveL)" stroke="#b4b4b4"/><path d="M12.5 29.5H35.5" stroke="#b4b4b4"/><rect x="13.0" y="30.0" width="22.0" height="4" fill="#ececec"/><path d="M15.0 32.0H26.299999999999997" stroke="#8f8f8f" stroke-width="1.2"/><path d="M31.0 32.0H33.0" stroke="#8f8f8f"/><path d="M4.5 3.5H29.5V18H24V22L20 18H4.5Z" fill="#fff" stroke="#c4c4c4"/><path d="M7.0 7.5H9.8" stroke="#b8b8b8" stroke-width="1.3"/><path d="M7.0 10.5H9.8" stroke="#7a7a7a" stroke-width="1.3"/><path d="M7.0 13.5H9.8" stroke="#7a7a7a" stroke-width="1.3"/><path d="M11.2 7.5H14.0" stroke="#7a7a7a" stroke-width="1.3"/><path d="M11.2 10.5H14.0" stroke="#b8b8b8" stroke-width="1.3"/><path d="M11.2 13.5H14.0" stroke="#7a7a7a" stroke-width="1.3"/><path d="M15.4 7.5H18.200000000000003" stroke="#7a7a7a" stroke-width="1.3"/><path d="M15.4 10.5H18.200000000000003" stroke="#7a7a7a" stroke-width="1.3"/><path d="M15.4 13.5H18.200000000000003" stroke="#b8b8b8" stroke-width="1.3"/><path d="M19.6 7.5H22.400000000000002" stroke="#7a7a7a" stroke-width="1.3"/><path d="M19.6 10.5H22.400000000000002" stroke="#7a7a7a" stroke-width="1.3"/><path d="M19.6 13.5H22.400000000000002" stroke="#7a7a7a" stroke-width="1.3"/><path d="M23.8 7.5H26.6" stroke="#b8b8b8" stroke-width="1.3"/><path d="M23.8 10.5H26.6" stroke="#7a7a7a" stroke-width="1.3"/><path d="M23.8 13.5H26.6" stroke="#7a7a7a" stroke-width="1.3"/></g><g transform="translate(254,48)"><rect x="12.5" y="11.5" width="23.0" height="23.0" rx="2" fill="url(#gDriveL)" stroke="#b4b4b4"/><path d="M12.5 29.5H35.5" stroke="#b4b4b4"/><rect x="13.0" y="30.0" width="22.0" height="4" fill="#ececec"/><path d="M15.0 32.0H26.299999999999997" stroke="#8f8f8f" stroke-width="1.2"/><path d="M31.0 32.0H33.0" stroke="#8f8f8f"/><path d="M8 3.5H32V18H26V22L22 18H8Z" fill="#fff" stroke="#c4c4c4"/><path d="M20.0 7.5H22.2" stroke="#8a8a8a" stroke-width="1.3"/><path d="M20.0 10.5H22.2" stroke="#8a8a8a" stroke-width="1.3"/><path d="M20.0 13.5H22.2" stroke="#8a8a8a" stroke-width="1.3"/><path d="M23.2 7.5H25.4" stroke="#8a8a8a" stroke-width="1.3"/><path d="M23.2 10.5H25.4" stroke="#8a8a8a" stroke-width="1.3"/><path d="M23.2 13.5H25.4" stroke="#8a8a8a" stroke-width="1.3"/><path d="M26.4 7.5H28.6" stroke="#8a8a8a" stroke-width="1.3"/><path d="M26.4 10.5H28.6" stroke="#8a8a8a" stroke-width="1.3"/><path d="M26.4 13.5H28.6" stroke="#8a8a8a" stroke-width="1.3"/><path d="M8.5 6H16.5L26 16H17L21 26.5L9.5 14.5H15.5Z" fill="#8f8f8f" stroke="#6f6f6f" stroke-width="0.6"/><path d="M5.5 9.5H9M4 11.5H9M4 13.5H7" stroke="#7a7a7a" stroke-width="1"/></g><g transform="translate(346,48)"><path d="M13 5.5H27.5V31.5H6.5V10.5Z" fill="#f4f9ff" stroke="#a5bdd6"/><path d="M13 5.5V10.5H6.5" fill="none" stroke="#a5bdd6"/><circle cx="26" cy="16" r="8.5" fill="#fffaf0" stroke="#b39c72"/><circle cx="26" cy="16.5" r="3.5" fill="#fff" stroke="#b39c72"/><rect x="12.5" y="17.5" width="18.0" height="16.0" rx="2" fill="url(#gDrive)" stroke="#7e7e7e"/><path d="M12.5 28.5H30.5" stroke="#7e7e7e"/><rect x="13.0" y="29.0" width="17.0" height="4" fill="#ececec"/><path d="M15.0 31.0H23.299999999999997" stroke="#6a6a6a" stroke-width="1.2"/><path d="M26.0 31.0H28.0" stroke="#6a6a6a"/><path d="M4.8 22.5Q6.5 13.8 16 13.8" fill="none" stroke="#3a9a3a" stroke-width="3.2"/><path d="M15.5 8.8L21 14L15.5 19.2Z" fill="#3f9f3f"/></g><g transform="translate(429,48)"><path d="M13 5.5H27.5V31.5H6.5V10.5Z" fill="#f4f9ff" stroke="#a5bdd6"/><path d="M13 5.5V10.5H6.5" fill="none" stroke="#a5bdd6"/><circle cx="26" cy="16" r="8.5" fill="#fffaf0" stroke="#b39c72"/><circle cx="26" cy="16.5" r="3.5" fill="#fff" stroke="#b39c72"/><rect x="12.5" y="17.5" width="18.0" height="16.0" rx="2" fill="url(#gDrive)" stroke="#7e7e7e"/><path d="M12.5 28.5H30.5" stroke="#7e7e7e"/><rect x="13.0" y="29.0" width="17.0" height="4" fill="#ececec"/><path d="M15.0 31.0H23.299999999999997" stroke="#6a6a6a" stroke-width="1.2"/><path d="M26.0 31.0H28.0" stroke="#6a6a6a"/><path d="M21 15.5H14.5Q10.5 15.5 10.5 19.5V27" fill="none" stroke="#5cbf5c" stroke-width="4"/><path d="M4.5 26.5H16.5L10.5 32.5Z" fill="#5cbf5c"/></g><g transform="translate(520,48)"><rect x="13.5" y="14.5" width="22.0" height="20.0" rx="2" fill="url(#gDriveL)" stroke="#a6a6a6"/><path d="M13.5 29.5H35.5" stroke="#a6a6a6"/><rect x="14.0" y="30.0" width="21.0" height="4" fill="#ececec"/><path d="M16.0 32.0H26.7" stroke="#8f8f8f" stroke-width="1.2"/><path d="M31.0 32.0H33.0" stroke="#8f8f8f"/><path d="M4.5 25.5A21.5 21.5 0 0 1 26 4V12A13.5 13.5 0 0 0 12.5 25.5Z" fill="#c9c9c9" stroke="#939393"/></g><g transform="translate(588,48)"><rect x="10" y="4" width="19" height="3" fill="#c49482"/><path d="M6.5 34V9Q6.5 5.5 10 5.5H29Q32.5 5.5 32.5 9V34" fill="#eaf3fb" stroke="#c0583a" stroke-width="1.4"/><rect x="8" y="12" width="24" height="7" fill="#b9c8d8"/><path d="M10.5 14.5V17H23.5V14.5M13.5 15.5V17M16.5 15.5V17M19.5 15.5V17" fill="none" stroke="#5a6c86" stroke-width="0.9"/><rect x="27" y="14.5" width="2" height="2" fill="#fff"/><rect x="8" y="20" width="24" height="7" fill="#b9c8d8"/><path d="M10.5 22.5V25H23.5V22.5M13.5 23.5V25M16.5 23.5V25M19.5 23.5V25" fill="none" stroke="#5a6c86" stroke-width="0.9"/><rect x="27" y="22.5" width="2" height="2" fill="#fff"/><rect x="8" y="28" width="24" height="7" fill="#b9c8d8"/><path d="M10.5 30.5V33H23.5V30.5M13.5 31.5V33M16.5 31.5V33M19.5 31.5V33" fill="none" stroke="#5a6c86" stroke-width="0.9"/><rect x="27" y="30.5" width="2" height="2" fill="#fff"/></g><g transform="translate(684,48)"><rect x="5.5" y="5.5" width="22" height="16" fill="#c2ecfc" stroke="#4a6275" stroke-width="1.2"/><rect x="5.5" y="19.5" width="22" height="2" fill="#4a6275"/><path d="M13.5 21.5V25M10 25H15" stroke="#4a6275" stroke-width="1.4"/><rect x="14.5" y="12.5" width="22" height="16" fill="#c0e3f7" stroke="#4a6275" stroke-width="1.2"/><rect x="14.5" y="26.5" width="22" height="2" fill="#4a6275"/><rect x="33" y="26.5" width="2.5" height="1.5" fill="#a9d46a"/><path d="M24 28.5V31.5M28 28.5V31.5" stroke="#4a6275" stroke-width="1.2"/><rect x="19.5" y="31" width="13.5" height="1.6" fill="#4a6275"/></g><g transform="translate(779,46)"><rect x="12.5" y="5.5" width="23.0" height="23.0" rx="2" fill="url(#gDriveL)" stroke="#b4b4b4"/><path d="M12.5 23.5H35.5" stroke="#b4b4b4"/><rect x="13.0" y="24.0" width="22.0" height="4" fill="#ececec"/><path d="M15.0 26.0H26.299999999999997" stroke="#8f8f8f" stroke-width="1.2"/><path d="M31.0 26.0H33.0" stroke="#8f8f8f"/><circle cx="13.5" cy="27.5" r="8.2" fill="#fff" stroke="#cdcdcd"/><path d="M9 27.5H18" stroke="#a3a3a3" stroke-width="2.2" stroke-linecap="round"/></g><g transform="translate(876,46)"><path d="M4.5 23L8.5 19.5V26L4.5 29Z M35.5 23L31.5 19.5V26L35.5 29Z" fill="#f2d27f" stroke="#a07a3c" stroke-width="0.9"/><rect x="8.5" y="19.5" width="23" height="17" fill="#e9c67c" stroke="#a07a3c"/><rect x="9" y="20" width="22" height="5" fill="#c3914c"/><rect x="9" y="25" width="22" height="5.5" fill="#f7dc95"/><path d="M8.5 30.5H31.5" stroke="#a07a3c"/><path d="M15.5 5H24.5V15.5H29L20 24L11 15.5H15.5Z" fill="url(#gArrowG)" stroke="#2b9a5c" stroke-width="0.9"/></g><g transform="translate(8,102)"><rect x="8.5" y="8.5" width="11" height="11" fill="#dadada" stroke="#666"/><rect x="9" y="16" width="10" height="3" fill="#c9d2c9"/><path d="M8.5 16.5H19.5" stroke="#666"/><circle cx="9.6" cy="9.5" r="5.6" fill="#e6f1f7" stroke="#a9b9c6" stroke-width="1"/><rect x="9" y="8.3" width="1.9" height="5.2" fill="#2f5566"/><rect x="9" y="5.4" width="1.9" height="1.8" fill="#2f5566"/></g><g transform="translate(972,758)"><rect x="8.5" y="8.5" width="11" height="11" fill="#dadada" stroke="#666"/><rect x="9" y="16" width="10" height="3" fill="#c9d2c9"/><path d="M8.5 16.5H19.5" stroke="#666"/><circle cx="9.6" cy="9.5" r="5.6" fill="#e6f1f7" stroke="#a9b9c6" stroke-width="1"/><rect x="9" y="8.3" width="1.9" height="5.2" fill="#2f5566"/><rect x="9" y="5.4" width="1.9" height="1.8" fill="#2f5566"/></g><g transform="translate(128,105)"><path d="M0.7 8.3L7.6 6L15.4 8.3V11.2L9 12.4L0.7 10.6Z" fill="#e4f2fd" stroke="#5d9bd6" stroke-width="1.2" stroke-linejoin="round"/><text x="0" y="18.3" font-family="Liberation Sans" font-size="8.4" fill="#3e3e3e" stroke="#3e3e3e" stroke-width="0.1" textLength="16" lengthAdjust="spacingAndGlyphs">Raw</text></g><g transform="translate(265,105)"><path d="M0.7 8.3L7.6 6L15.4 8.3V11.2L9 12.4L0.7 10.6Z" fill="#e4f2fd" stroke="#5d9bd6" stroke-width="1.2" stroke-linejoin="round"/><text x="0" y="18.3" font-family="Liberation Sans" font-size="8.4" fill="#3e3e3e" stroke="#3e3e3e" stroke-width="0.1" textLength="16" lengthAdjust="spacingAndGlyphs">Rec.</text></g><g transform="translate(1087,761)"><path d="M0.5 0.5H14.5V10.5H10L8 13L7 10.5H0.5Z" fill="#fff" stroke="#8fc4df"/><rect x="2.5" y="2.5" width="1.5" height="1.3" fill="#3a7bd5"/><rect x="2.5" y="5.0" width="1.5" height="1.3" fill="#d04a4a"/><rect x="2.5" y="7.5" width="1.5" height="1.3" fill="#3aaa5a"/><rect x="4.9" y="2.5" width="1.5" height="1.3" fill="#d04a4a"/><rect x="4.9" y="5.0" width="1.5" height="1.3" fill="#3aaa5a"/><rect x="4.9" y="7.5" width="1.5" height="1.3" fill="#7a7a7a"/><rect x="7.3" y="2.5" width="1.5" height="1.3" fill="#3aaa5a"/><rect x="7.3" y="5.0" width="1.5" height="1.3" fill="#7a7a7a"/><rect x="7.3" y="7.5" width="1.5" height="1.3" fill="#3a7bd5"/><rect x="9.7" y="2.5" width="1.5" height="1.3" fill="#7a7a7a"/><rect x="9.7" y="5.0" width="1.5" height="1.3" fill="#3a7bd5"/><rect x="9.7" y="7.5" width="1.5" height="1.3" fill="#d04a4a"/><rect x="12.1" y="2.5" width="1.5" height="1.3" fill="#3a7bd5"/><rect x="12.1" y="5.0" width="1.5" height="1.3" fill="#d04a4a"/><rect x="12.1" y="7.5" width="1.5" height="1.3" fill="#3aaa5a"/></g><path d="M8 160L12 164L16 160" fill="none" stroke="#333" stroke-width="1.5"/><path d="M29.5 178L33.5 182L29.5 186" fill="none" stroke="#a6a6a6" stroke-width="1.5"/><path d="M28 200L32 204L36 200" fill="none" stroke="#333" stroke-width="1.5"/><path d="M29.5 498L33.5 502L29.5 506" fill="none" stroke="#a6a6a6" stroke-width="1.5"/><rect x="25.5" y="155.5" width="15" height="9.5" fill="#48b4f8" stroke="#2a6a9e" stroke-width="1"/><rect x="32.3" y="165" width="1.8" height="1" fill="#7ab4e0"/><rect x="29" y="166" width="8" height="1.2" fill="#55606a"/><rect x="25" y="169" width="16" height="1.3" fill="#8a96a2"/><g transform="translate(45,173)"><rect x="1.5" y="1.5" width="13" height="15" fill="#e4e4e4" stroke="#1a1a1a" stroke-width="1.3"/><path d="M0.8 0.8H9L0.8 9Z" fill="url(#gSSD)"/><text x="3.8" y="12.2" font-family="Liberation Sans" font-weight="bold" font-size="10" fill="#111" textLength="9.4" lengthAdjust="spacingAndGlyphs">SSD</text><rect x="1.5" y="14" width="13" height="2.5" fill="#2a2a2a"/><rect x="5" y="14.7" width="2" height="1.2" fill="#e8e070"/><rect x="9" y="14.7" width="2" height="1.2" fill="#e8e070"/></g><g transform="translate(45,197)"><path d="M0.5 4.5L7 1.5L15.5 4L15.5 7L9 10L0.5 7.5Z" fill="#a9a9a9" stroke="#555" stroke-width="0.8"/><path d="M0.8 4.5L7 1.8L15.2 4L9 6.8Z" fill="#e6e6e6"/><path d="M9 7L15.5 4V7L9 10Z" fill="#4a4a4a"/><path d="M1 6L8.5 8.6" stroke="#eee" stroke-width="0.7"/></g><g transform="translate(45,477)"><path d="M0.5 4.5L7 1.5L15.5 4L15.5 7L9 10L0.5 7.5Z" fill="#a9a9a9" stroke="#555" stroke-width="0.8"/><path d="M0.8 4.5L7 1.8L15.2 4L9 6.8Z" fill="#e6e6e6"/><path d="M9 7L15.5 4V7L9 10Z" fill="#4a4a4a"/><path d="M1 6L8.5 8.6" stroke="#eee" stroke-width="0.7"/></g><g transform="translate(42,490)"><rect x="4.5" y="4.5" width="13" height="13" fill="#dcdfe2" stroke="#1e1e1e" stroke-width="1.1"/><path d="M4 4H11L4 11Z" fill="#f2d43a" opacity="0.85"/><rect x="5.3" y="17.5" width="11.5" height="2" fill="#f4f4f4" stroke="#1e1e1e" stroke-width="1"/><path d="M11.3 7V15.5L7.3 10M11.3 15L14.6 11" fill="none" stroke="#222" stroke-width="1.1"/><path d="M9.8 7.8L11.3 5.8L12.8 7.8Z" fill="#222"/><rect x="6.4" y="9" width="2" height="2" fill="#555"/><path d="M13.4 10.6H15.8M14.6 9.4V11.8" stroke="#222" stroke-width="1"/></g><g transform="translate(65,212)"><path d="M0.7 8.3L7.6 6L15.4 8.3V11.2L9 12.4L0.7 10.6Z" fill="#e4f2fd" stroke="#5d9bd6" stroke-width="1.2" stroke-linejoin="round"/><text x="0" y="18.3" font-family="Liberation Sans" font-size="8.4" fill="#3e3e3e" stroke="#3e3e3e" stroke-width="0.1" textLength="16" lengthAdjust="spacingAndGlyphs">Rec.</text></g><g transform="translate(65,232)"><path d="M0.7 8.3L7.6 6L15.4 8.3V11.2L9 12.4L0.7 10.6Z" fill="#e4f2fd" stroke="#5d9bd6" stroke-width="1.2" stroke-linejoin="round"/><text x="0" y="18.3" font-family="Liberation Sans" font-size="8.4" fill="#3e3e3e" stroke="#3e3e3e" stroke-width="0.1" textLength="16" lengthAdjust="spacingAndGlyphs">Rec.</text></g><g transform="translate(65,252)"><path d="M0.7 8.3L7.6 6L15.4 8.3V11.2L9 12.4L0.7 10.6Z" fill="#e4f2fd" stroke="#5d9bd6" stroke-width="1.2" stroke-linejoin="round"/><text x="0" y="18.3" font-family="Liberation Sans" font-size="8.4" fill="#3e3e3e" stroke="#3e3e3e" stroke-width="0.1" textLength="16" lengthAdjust="spacingAndGlyphs">Rec.</text></g><g transform="translate(65,272)"><path d="M0.7 8.3L7.6 6L15.4 8.3V11.2L9 12.4L0.7 10.6Z" fill="#e4f2fd" stroke="#5d9bd6" stroke-width="1.2" stroke-linejoin="round"/><text x="0" y="18.3" font-family="Liberation Sans" font-size="8.4" fill="#3e3e3e" stroke="#3e3e3e" stroke-width="0.1" textLength="16" lengthAdjust="spacingAndGlyphs">Rec.</text></g><g transform="translate(65,292)"><path d="M0.7 8.3L7.6 6L15.4 8.3V11.2L9 12.4L0.7 10.6Z" fill="#e4f2fd" stroke="#5d9bd6" stroke-width="1.2" stroke-linejoin="round"/><text x="0" y="18.3" font-family="Liberation Sans" font-size="8.4" fill="#3e3e3e" stroke="#3e3e3e" stroke-width="0.1" textLength="16" lengthAdjust="spacingAndGlyphs">Rec.</text></g><g transform="translate(65,312)"><path d="M0.7 8.3L7.6 6L15.4 8.3V11.2L9 12.4L0.7 10.6Z" fill="#e4f2fd" stroke="#5d9bd6" stroke-width="1.2" stroke-linejoin="round"/><text x="0" y="18.3" font-family="Liberation Sans" font-size="8.4" fill="#3e3e3e" stroke="#3e3e3e" stroke-width="0.1" textLength="16" lengthAdjust="spacingAndGlyphs">Rec.</text></g><g transform="translate(65,332)"><path d="M0.7 8.3L7.6 6L15.4 8.3V11.2L9 12.4L0.7 10.6Z" fill="#e4f2fd" stroke="#5d9bd6" stroke-width="1.2" stroke-linejoin="round"/><text x="0" y="18.3" font-family="Liberation Sans" font-size="8.4" fill="#3e3e3e" stroke="#3e3e3e" stroke-width="0.1" textLength="16" lengthAdjust="spacingAndGlyphs">Rec.</text></g><g transform="translate(65,352)"><path d="M0.7 8.3L7.6 6L15.4 8.3V11.2L9 12.4L0.7 10.6Z" fill="#e4f2fd" stroke="#5d9bd6" stroke-width="1.2" stroke-linejoin="round"/><text x="0" y="18.3" font-family="Liberation Sans" font-size="8.4" fill="#3e3e3e" stroke="#3e3e3e" stroke-width="0.1" textLength="16" lengthAdjust="spacingAndGlyphs">Rec.</text></g><g transform="translate(65,372)"><path d="M0.7 8.3L7.6 6L15.4 8.3V11.2L9 12.4L0.7 10.6Z" fill="#e4f2fd" stroke="#5d9bd6" stroke-width="1.2" stroke-linejoin="round"/><text x="0" y="18.3" font-family="Liberation Sans" font-size="8.4" fill="#3e3e3e" stroke="#3e3e3e" stroke-width="0.1" textLength="16" lengthAdjust="spacingAndGlyphs">Rec.</text></g><g transform="translate(65,392)"><path d="M0.7 8.3L7.6 6L15.4 8.3V11.2L9 12.4L0.7 10.6Z" fill="#e4f2fd" stroke="#5d9bd6" stroke-width="1.2" stroke-linejoin="round"/><text x="0" y="18.3" font-family="Liberation Sans" font-size="8.4" fill="#3e3e3e" stroke="#3e3e3e" stroke-width="0.1" textLength="16" lengthAdjust="spacingAndGlyphs">Rec.</text></g><g transform="translate(65,412)"><path d="M0.7 8.3L7.6 6L15.4 8.3V11.2L9 12.4L0.7 10.6Z" fill="#e4f2fd" stroke="#5d9bd6" stroke-width="1.2" stroke-linejoin="round"/><text x="0" y="18.3" font-family="Liberation Sans" font-size="8.4" fill="#3e3e3e" stroke="#3e3e3e" stroke-width="0.1" textLength="16" lengthAdjust="spacingAndGlyphs">Rec.</text></g><g transform="translate(65,432)"><path d="M0.7 8.3L7.6 6L15.4 8.3V11.2L9 12.4L0.7 10.6Z" fill="#e4f2fd" stroke="#5d9bd6" stroke-width="1.2" stroke-linejoin="round"/><text x="0" y="18.3" font-family="Liberation Sans" font-size="8.4" fill="#3e3e3e" stroke="#3e3e3e" stroke-width="0.1" textLength="16" lengthAdjust="spacingAndGlyphs">Raw</text></g><g transform="translate(65,452)"><path d="M0.7 8.3L7.6 6L15.4 8.3V11.2L9 12.4L0.7 10.6Z" fill="#e4f2fd" stroke="#5d9bd6" stroke-width="1.2" stroke-linejoin="round"/><text x="0" y="18.3" font-family="Liberation Sans" font-size="8.4" fill="#3e3e3e" stroke="#3e3e3e" stroke-width="0.1" textLength="16" lengthAdjust="spacingAndGlyphs">Rec.</text></g></svg>
</body></html>
